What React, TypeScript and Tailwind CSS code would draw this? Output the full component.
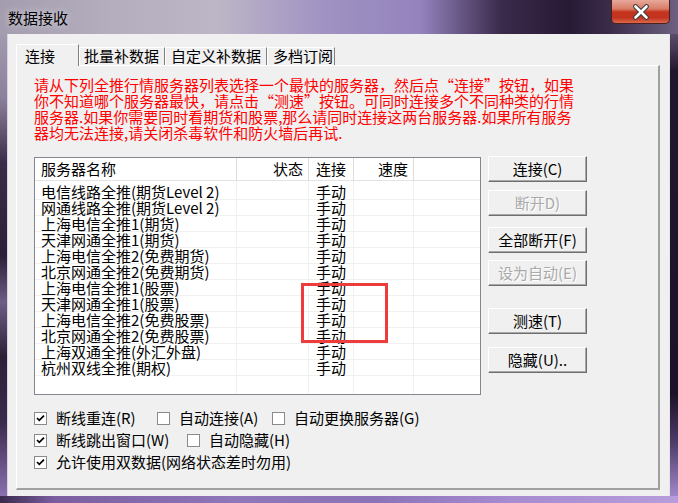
import React from 'react';

const servers = [
  '电信线路全推(期货Level 2)',
  '网通线路全推(期货Level 2)',
  '上海电信全推1(期货)',
  '天津网通全推1(期货)',
  '上海电信全推2(免费期货)',
  '北京网通全推2(免费期货)',
  '上海电信全推1(股票)',
  '天津网通全推1(股票)',
  '上海电信全推2(免费股票)',
  '北京网通全推2(免费股票)',
  '上海双通全推(外汇外盘)',
  '杭州双线全推(期权)',
];

const Btn: React.FC<{ label: string; disabled?: boolean; className?: string }> = ({ label, disabled, className }) => (
  <div
    className={`h-[26px] w-[99px] flex items-center justify-center bg-[#f0f0f0] border-t border-l border-white border-r border-b border-r-[#6e6e6e] border-b-[#6e6e6e] shadow-[inset_-1px_-1px_0_#a8a8a8] leading-[16px] ${
      disabled ? 'text-[#a9a9a9] [text-shadow:1px_1px_0_#ffffff]' : 'text-black'
    } ${className ?? ''}`}
  >
    {label}
  </div>
);

const Check: React.FC<{ checked?: boolean }> = ({ checked }) => (
  <span className="w-[13px] h-[13px] shrink-0 border border-[#8a8a8a] bg-white flex items-center justify-center">
    {checked && (
      <svg width="11" height="11" viewBox="0 0 11 11">
        <path d="M2 5 L4.3 7.4 L9 2.6" stroke="#000" strokeWidth="1.7" fill="none" />
      </svg>
    )}
  </span>
);

const Opt: React.FC<{ label: string; checked?: boolean; className?: string }> = ({ label, checked, className }) => (
  <div className={`flex items-center shrink-0 ${className ?? ''}`}>
    <Check checked={checked} />
    <span className="ml-[9px] leading-[16px] whitespace-nowrap">{label}</span>
  </div>
);

// 列表的一列：每格 16px，底部网格线
const Column: React.FC<{ className: string; cells: string[]; cellClass?: string }> = ({ className, cells, cellClass }) => (
  <div className={`flex flex-col pt-[3px] ${className}`}>
    {cells.map((c, i) => (
      <div key={i} className={`h-[16px] border-b border-[#f0f0f0] leading-[15px] whitespace-nowrap ${cellClass ?? ''}`}>
        {c}
      </div>
    ))}
  </div>
);

const App: React.FC = () => {
  const empty = servers.map(() => '');
  return (
    <div className="w-[678px] h-[503px] relative overflow-hidden flex flex-col font-['Noto_Sans_CJK_SC','Noto_Sans',sans-serif] text-[15px] text-black bg-[#2a1f36]">
      {/* 标题栏 */}
      <div className="h-[34px] shrink-0 flex items-start justify-between bg-[linear-gradient(90deg,#a39daf_0%,#b3adbd_16%,#bdb6c7_32%,#a092c2_48%,#9483bd_62%,#3a2a4b_74%,#271a35_84%,#3b2d4a_90%,#6e6080_100%)]">
        <div className="pl-[8px] pt-[10px] leading-[16px] [text-shadow:0_0_7px_rgba(255,255,255,0.7)]">数据接收</div>
        <div className="mr-[8px] w-[59px] h-[24px] rounded-b-[5px] border border-t-0 border-[#4d1f1f] bg-[linear-gradient(180deg,#e7a89a_0%,#d97d68_38%,#c4331d_52%,#c23420_78%,#dc6a4a_100%)] flex items-center justify-center">
          <svg width="18" height="16" viewBox="0 0 18 16">
            <path d="M3.5 2.5 L14.5 13.5 M14.5 2.5 L3.5 13.5" stroke="#3b3b3b" strokeWidth="4.6" strokeLinecap="round" />
            <path d="M3.5 2.5 L14.5 13.5 M14.5 2.5 L3.5 13.5" stroke="#ffffff" strokeWidth="2.6" strokeLinecap="round" />
          </svg>
        </div>
      </div>

      <div className="flex-1 flex min-h-0">
        {/* 左边框 */}
        <div className="w-[8px] shrink-0 border-r border-[#d8d3de] bg-[linear-gradient(180deg,#a39bb0_0%,#8b809b_14%,#3a2c48_28%,#2b1f38_48%,#6d5c84_58%,#2c2038_70%,#3a2a4c_84%,#8a70b0_100%)]" />

        {/* 客户区 */}
        <div className="flex-1 flex flex-col bg-[#f0f0f0] pl-[8px] pt-[10px] pr-[9px] pb-[6px] border-r border-[#e6e6e6]">
          {/* 选项卡 */}
          <div className="h-[21px] shrink-0 flex items-end">
            <div className="relative z-10 -mb-px h-[22px] w-[63px] bg-[#f0f0f0] border-t border-l border-white border-r border-r-[#7f7f7f] pl-[8px] pt-[3px] leading-[16px]">
              连接
            </div>
            <div className="h-[18px] w-[86px] border-t border-l border-white border-r border-r-[#7f7f7f] pl-[4px] leading-[16px] whitespace-nowrap">
              批量补数据
            </div>
            <div className="h-[18px] w-[102px] border-t border-l border-white border-r border-r-[#7f7f7f] pl-[5px] leading-[16px] whitespace-nowrap">
              自定义补数据
            </div>
            <div className="h-[18px] w-[68px] border-t border-l border-white border-r border-r-[#7f7f7f] pl-[5px] leading-[16px] whitespace-nowrap">
              多档订阅
            </div>
          </div>

          {/* 面板 */}
          <div className="flex-1 flex flex-col border-t border-l border-white border-r-2 border-b-2 border-r-[#a0a0a0] border-b-[#a0a0a0] pl-[17px] pt-[11px]">
            <div className="text-[#ff0000] leading-[16px] whitespace-nowrap">
              <div>请从下列全推行情服务器列表选择一个最快的服务器，然后点“连接”按钮，如果</div>
              <div>你不知道哪个服务器最快，请点击“测速”按钮。可同时连接多个不同种类的行情</div>
              <div>服务器.如果你需要同时看期货和股票,那么请同时连接这两台服务器.如果所有服务</div>
              <div>器均无法连接,请关闭杀毒软件和防火墙后再试.</div>
            </div>

            <div className="mt-[16px] flex items-start">
              {/* 服务器列表 */}
              <div className="w-[447px] h-[238px] shrink-0 border border-[#828790] bg-white flex flex-col">
                <div className="h-[23px] shrink-0 flex border-b border-[#e3e3e3]">
                  <div className="w-[202px] border-r border-[#dcdcdc] pl-[6px] flex items-center leading-[16px]">服务器名称</div>
                  <div className="w-[72px] border-r border-[#dcdcdc] pr-[5px] flex items-center justify-end leading-[16px]">状态</div>
                  <div className="w-[45px] border-r border-[#dcdcdc] flex items-center justify-center leading-[16px]">连接</div>
                  <div className="w-[60px] border-r border-[#dcdcdc] pr-[5px] flex items-center justify-end leading-[16px]">速度</div>
                  <div className="flex-1" />
                </div>
                <div className="flex-1 flex min-h-0">
                  <Column className="w-[202px] border-r border-[#f0f0f0]" cells={servers} cellClass="pl-[6px]" />
                  <Column className="w-[72px] border-r border-[#f0f0f0]" cells={empty} />
                  <Column className="w-[45px] border-r border-[#f0f0f0]" cells={servers.map(() => '手动')} cellClass="text-center" />
                  <Column className="w-[60px] border-r border-[#f0f0f0]" cells={empty} />
                  <Column className="flex-1" cells={empty} />
                </div>
              </div>

              {/* 按钮 */}
              <div className="ml-[7px] -mt-px flex flex-col">
                <Btn label="连接(C)" />
                <Btn label="断开D)" disabled className="mt-[8px]" />
                <Btn label="全部断开(F)" className="mt-[11px]" />
                <Btn label="设为自动(E)" disabled className="mt-[7px]" />
                <Btn label="测速(T)" className="mt-[22px]" />
                <Btn label="隐藏(U).." className="mt-[13px]" />
              </div>
            </div>

            {/* 选项 */}
            <div className="mt-[12px] flex flex-col">
              <div className="h-[22px] flex items-center">
                <Opt label="断线重连(R)" checked className="w-[123px]" />
                <Opt label="自动连接(A)" className="w-[115px]" />
                <Opt label="自动更换服务器(G)" />
              </div>
              <div className="h-[22px] flex items-center">
                <Opt label="断线跳出窗口(W)" checked className="w-[153px]" />
                <Opt label="自动隐藏(H)" />
              </div>
              <div className="h-[22px] flex items-center">
                <Opt label="允许使用双数据(网络状态差时勿用)" checked />
              </div>
            </div>
          </div>
        </div>

        {/* 右边框 */}
        <div className="w-[8px] shrink-0 bg-[linear-gradient(180deg,#5b4d6a_0%,#22182e_8%,#1d1328_78%,#4a3a66_88%,#a088c8_100%)]" />
      </div>

      {/* 下边框 */}
      <div className="h-[7px] shrink-0 bg-[linear-gradient(90deg,#3a2a4c_0%,#7a5ea0_8%,#9077ba_35%,#8c72b6_55%,#a68bd0_75%,#b79ddb_100%)]" />

      {/* 红色标注框 */}
      <div className="absolute left-[301px] top-[283px] w-[87px] h-[60px] border-[3px] border-[#ec3c3c]" />
    </div>
  );
};

export default App;
